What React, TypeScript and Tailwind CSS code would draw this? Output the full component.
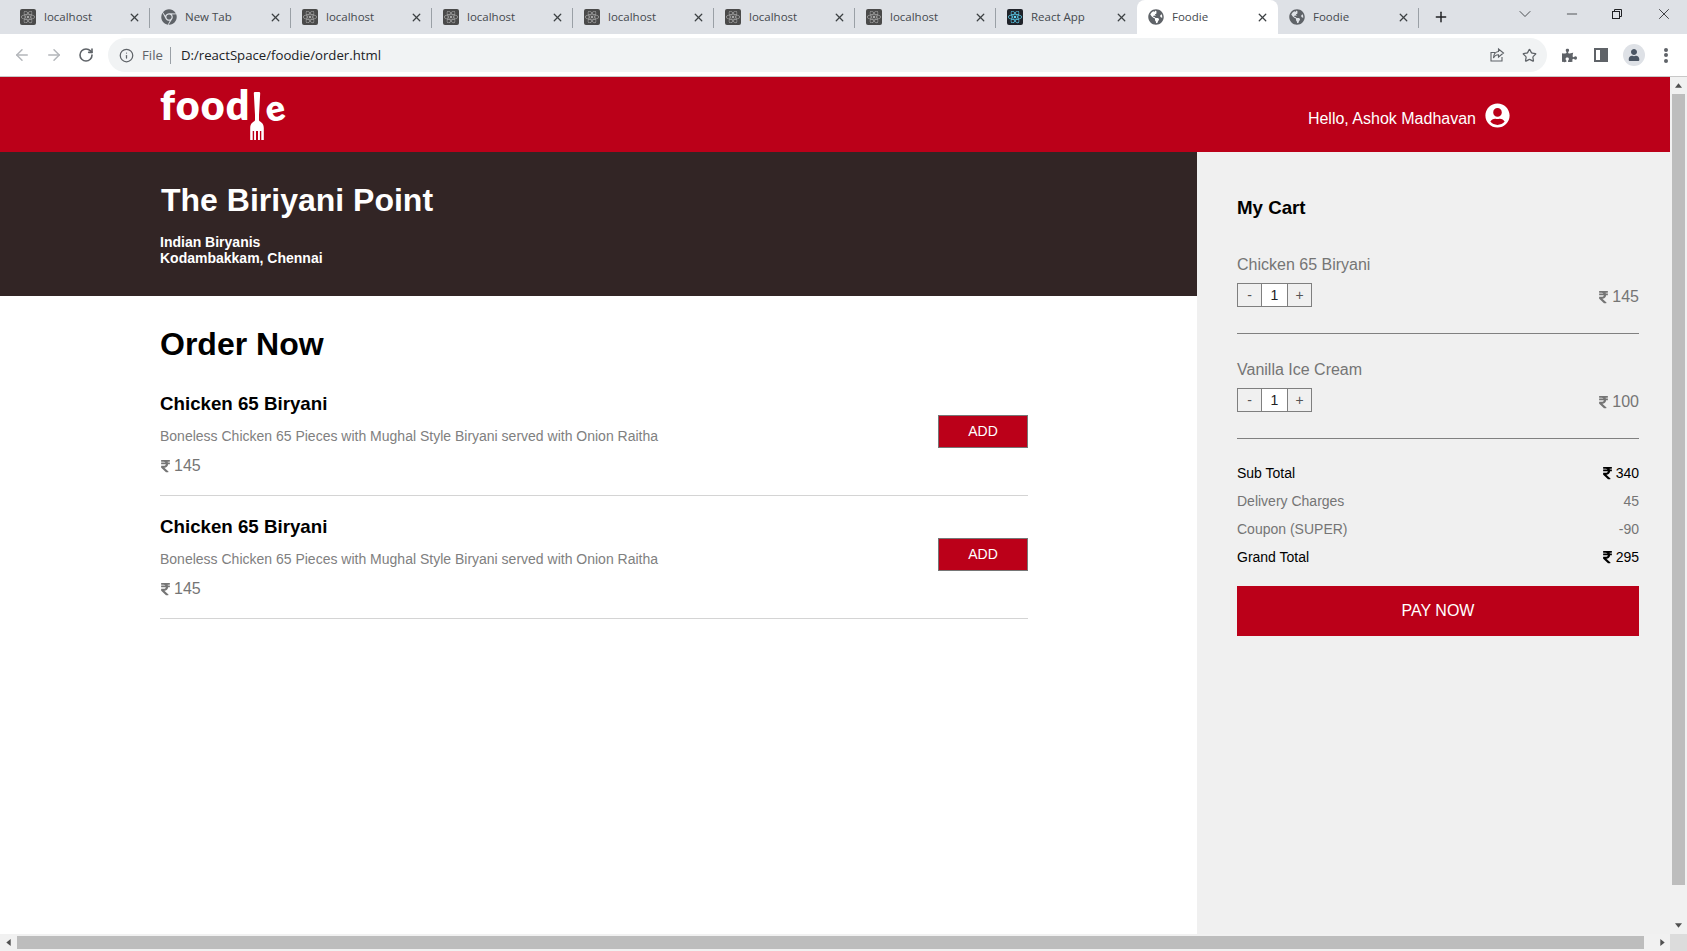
import React from "react";
import { ArrowLeft, ArrowRight, RotateCw, Info, Star, X, Plus, ChevronDown, Minus } from "lucide-react";
import { FaReact, FaChrome, FaGlobeAmericas, FaPuzzlePiece, FaUser, FaUserCircle, FaRupeeSign } from "react-icons/fa";

type Tab = { label: string; icon: "react" | "chrome" | "globe" | "app"; active?: boolean };

const tabs: Tab[] = [
  { label: "localhost", icon: "react" },
  { label: "New Tab", icon: "chrome" },
  { label: "localhost", icon: "react" },
  { label: "localhost", icon: "react" },
  { label: "localhost", icon: "react" },
  { label: "localhost", icon: "react" },
  { label: "localhost", icon: "react" },
  { label: "React App", icon: "app" },
  { label: "Foodie", icon: "globe", active: true },
  { label: "Foodie", icon: "globe" },
];

function Favicon({ icon }: { icon: Tab["icon"] }) {
  if (icon === "chrome") return <FaChrome className="w-4 h-4 text-[#5f6368]" />;
  if (icon === "globe") return <FaGlobeAmericas className="w-4 h-4 text-[#5f6368]" />;
  if (icon === "app")
    return (
      <span className="w-4 h-4 rounded-[2px] bg-[#20232a] flex items-center justify-center">
        <FaReact className="w-[14px] h-[14px] text-[#61dafb]" />
      </span>
    );
  return (
    <span className="w-4 h-4 rounded-[2px] bg-[#4a4a4a] flex items-center justify-center">
      <FaReact className="w-[14px] h-[14px] text-[#a8a8a8]" />
    </span>
  );
}

function BrowserTab({ tab, sep }: { tab: Tab; sep: boolean }) {
  return (
    <div
      className={
        "relative w-[141px] h-[34px] shrink-0 flex items-center pl-[11px] pr-[9px] rounded-t-[8px] " +
        (tab.active ? "bg-white" : "")
      }
    >
      <Favicon icon={tab.icon} />
      <span className="ml-[8px] flex-1 text-[11.5px] text-[#45494e] font-['Open_Sans',sans-serif]">{tab.label}</span>
      <X className="w-[13px] h-[13px] text-[#3c4043]" strokeWidth={2.4} />
      {sep && <span className="absolute right-0 top-[8px] h-[20px] w-px bg-[#9aa0a6]" />}
    </div>
  );
}

function TabStrip() {
  return (
    <div className="h-[34px] bg-[#dee1e6] flex items-center pl-[9px] shrink-0">
      {tabs.map((t, i) => (
        <BrowserTab key={i} tab={t} sep={!t.active && i !== 7} />
      ))}
      <Plus className="ml-[14px] w-[16px] h-[16px] text-[#202124]" strokeWidth={2.2} />
      <div className="ml-auto flex items-center h-full pb-[6px]">
        <ChevronDown className="w-[20px] h-[20px] text-[#3c4043] mr-[29px]" strokeWidth={1.1} />
        <Minus className="w-[16px] h-[16px] text-[#202124] mr-[31px]" strokeWidth={1.1} />
        <svg width="12" height="12" viewBox="0 0 12 12" fill="none" stroke="#202124" className="mr-[32px]">
          <rect x="1.5" y="3.5" width="7" height="7" />
          <path d="M3.5 3.5V1.5H10.500V8.500H8.500" />
        </svg>
        <X className="w-[18px] h-[18px] text-[#202124] mr-[14px]" strokeWidth={1.1} />
      </div>
    </div>
  );
}

function Toolbar() {
  return (
    <div className="h-[43px] bg-white border-b border-[#c8c8c8] flex items-start pt-[4px] shrink-0">
      <div className="w-[108px] h-[34px] flex items-center pl-[13px] gap-[14px] shrink-0">
        <ArrowLeft className="w-[18px] h-[18px] text-[#b4b7bb]" strokeWidth={2} />
        <ArrowRight className="w-[18px] h-[18px] text-[#b4b7bb]" strokeWidth={2} />
        <RotateCw className="ml-[1px] w-[16px] h-[16px] text-[#5f6368]" strokeWidth={2.4} />
      </div>
      <div className="w-[1439px] h-[34px] bg-[#f1f3f4] rounded-full flex items-center pl-[11px] pr-[10px] text-[13.2px] font-['Open_Sans',sans-serif]">
        <Info className="w-[15px] h-[15px] text-[#5f6368]" strokeWidth={2} />
        <span className="ml-[8px] mt-[1px] text-[#5f6368]">File</span>
        <span className="ml-[7px] mr-[10px] w-px h-[17px] bg-[#9aa0a6]" />
        <span className="mt-[1px] text-[#202124]">D:/reactSpace/foodie/order.html</span>
        <svg width="16" height="16" viewBox="0 0 16 16" fill="none" stroke="#5f6368" strokeWidth="1.1" className="ml-auto mr-[17px]">
          <path d="M13 10v4H2V5.500h4" />
          <path d="M9.500 2l5 4-5 4V7.700C7 7.700 5.400 8.800 4.500 11 4.600 7.400 6.400 4.900 9.500 4.500z" />
        </svg>
        <Star className="w-[15px] h-[15px] text-[#5f6368]" strokeWidth={2} />
      </div>
      <div className="h-[34px] flex items-center pl-[15px] text-[#5f6368]">
        <FaPuzzlePiece className="w-[15px] h-[15px]" />
        <span className="ml-[17px] w-[14px] h-[14px] border-[2px] border-[#5f6368] flex justify-end">
          <span className="w-[6px] h-full bg-[#5f6368]" />
        </span>
        <span className="ml-[15px] w-[22px] h-[22px] rounded-full bg-[#dee1e6] flex items-center justify-center">
          <FaUser className="w-[12px] h-[12px] text-[#4b5563]" />
        </span>
        <span className="ml-[19px] flex flex-col gap-[1.500px]">
          <span className="w-[4px] h-[4px] rounded-full bg-[#5f6368]" />
          <span className="w-[4px] h-[4px] rounded-full bg-[#5f6368]" />
          <span className="w-[4px] h-[4px] rounded-full bg-[#5f6368]" />
        </span>
      </div>
    </div>
  );
}

function Fork() {
  return (
    <svg width="14" height="50" viewBox="0 0 14 50" fill="white" className="shrink-0">
      <path d="M3.800 3Q3.800 2 5 2H9Q10.200 2 10.200 3L9 25V30C9 32 13.800 32 13.800 38V50H11.300V41H9.900V50H8V41H6V50H4.100V41H2.700V50H.2V38C.2 32 5 32 5 30V25z" />
    </svg>
  );
}

function Logo() {
  return (
    <div className="flex items-start h-[50px] text-white font-['Lato',sans-serif] font-extrabold text-[41px] leading-[40px]">
      <span className="w-[90px] mt-[-5px] tracking-[1.2px]">food</span>
      <Fork />
      <span className="ml-[1px] mt-[-3px] text-[36px] -rotate-12">e</span>
    </div>
  );
}

function Rupee() {
  return <FaRupeeSign className="w-[11px] h-[14px] mr-[3px] inline-block" />;
}

function MenuItem() {
  return (
    <div className="h-[123px] border-b border-[#d4d4d4] flex items-start justify-between">
      <div className="pt-[19px]">
        <h3 className="text-[18.720px] leading-[24px] font-bold text-black">Chicken 65 Biryani</h3>
        <p className="mt-[10px] text-[14px] leading-[20px] text-[#808080]">
          Boneless Chicken 65 Pieces with Mughal Style Biryani served with Onion Raitha
        </p>
        <p className="mt-[8px] text-[16px] leading-[24px] text-[#757575] flex items-center">
          <Rupee />
          145
        </p>
      </div>
      <button className="mt-[42px] w-[90px] h-[33px] bg-[#bb0019] border border-[#767676] text-white text-[14px]">ADD</button>
    </div>
  );
}

function Qty() {
  return (
    <div className="mt-[7px] w-[75px] h-[24px] border border-[#7f7f7f] flex text-[14px] text-[#555]">
      <span className="w-[23px] flex items-center justify-center">-</span>
      <span className="w-[27px] bg-white border-x border-[#7f7f7f] flex items-center justify-center text-[#222]">1</span>
      <span className="flex-1 flex items-center justify-center">+</span>
    </div>
  );
}

function CartItem({ name, price }: { name: string; price: string }) {
  return (
    <div className="h-[105px] border-b border-[#808080] flex items-start justify-between">
      <div className="pt-[25px]">
        <p className="text-[16px] leading-[22px] text-[#757575]">{name}</p>
        <Qty />
      </div>
      <p className="mt-[57px] text-[16px] leading-[22px] text-[#757575] flex items-center">
        <Rupee />
        {price}
      </p>
    </div>
  );
}

function Total({ label, value, strong, rupee }: { label: string; value: string; strong?: boolean; rupee?: boolean }) {
  return (
    <div className={"h-[28px] flex items-center justify-between text-[14px] " + (strong ? "text-black" : "text-[#757575]")}>
      <span>{label}</span>
      <span className="flex items-center">
        {rupee && <Rupee />}
        {value}
      </span>
    </div>
  );
}

function Arrow({ d }: { d: string }) {
  return (
    <svg width="7" height="7" viewBox="0 0 8 8" fill="#505050">
      <path d={d} />
    </svg>
  );
}

export default function App() {
  return (
    <div className="w-[1687px] h-[951px] overflow-hidden flex flex-col bg-white font-['Liberation_Sans',Arial,sans-serif]">
      <TabStrip />
      <Toolbar />
      <div className="flex-1 min-h-0 flex">
        <div className="flex-1 min-w-0 flex flex-col">
          <header className="h-[75px] bg-[#bb0019] flex shrink-0 pl-[160px] pr-[160px] pt-[13px] justify-between">
            <Logo />
            <div className="flex items-center h-[50px] text-white text-[16px] gap-[9px]">
              <span className="mt-[8px]">Hello, Ashok Madhavan</span>
              <FaUserCircle className="w-[25px] h-[25px]" />
            </div>
          </header>
          <div className="flex-1 min-h-0 flex">
            <main className="w-[1197px] shrink-0">
              <section className="h-[144px] bg-[#322525] text-white pl-[161px] pt-[28px]">
                <h1 className="text-[32px] leading-[40px] font-bold">The Biriyani Point</h1>
                <p className="mt-[14px] ml-[-1px] text-[14px] leading-[16px] font-bold">Indian Biryanis</p>
                <p className="ml-[-1px] text-[14px] leading-[16px] font-bold">Kodambakkam, Chennai</p>
              </section>
              <section className="pl-[160px] w-[1028px] pt-[28px]">
                <h2 className="text-[32px] leading-[40px] font-bold text-black mb-[9px]">Order Now</h2>
                <MenuItem />
                <MenuItem />
              </section>
            </main>
            <aside className="flex-1 bg-[#f0f0f0] pl-[40px] pr-[31px] pt-[43px]">
              <h2 className="text-[18.720px] leading-[26px] font-bold text-black mb-[8px]">My Cart</h2>
              <CartItem name="Chicken 65 Biryani" price="145" />
              <CartItem name="Vanilla Ice Cream" price="100" />
              <div className="mt-[20px]">
                <Total label="Sub Total" value="340" strong rupee />
                <Total label="Delivery Charges" value="45" />
                <Total label="Coupon (SUPER)" value="-90" />
                <Total label="Grand Total" value="295" strong rupee />
              </div>
              <button className="mt-[15px] w-full h-[50px] bg-[#bb0019] text-white text-[16px]">PAY NOW</button>
            </aside>
          </div>
        </div>
        <div className="w-[17px] shrink-0 bg-[#f1f1f1] flex flex-col items-center">
          <div className="h-[17px] flex items-center justify-center">
            <Arrow d="M4 1.500L8 6.500H0z" />
          </div>
          <div className="w-[13px] flex-1 bg-[#bdbdbd]" />
          <div className="h-[49px] flex items-end justify-center pb-[5px]">
            <Arrow d="M4 6.500L0 1.500H8z" />
          </div>
        </div>
      </div>
      <div className="h-[17px] shrink-0 flex bg-[#f1f1f1]">
        <div className="w-[17px] flex items-center justify-center">
          <Arrow d="M1.500 4L6.500 0V8z" />
        </div>
        <div className="w-[1627px] h-[13px] mt-[2px] bg-[#bdbdbd]" />
        <div className="flex-1 flex items-center justify-end pr-[4px]">
          <Arrow d="M6.500 4L1.500 8V0z" />
        </div>
        <div className="w-[17px] bg-[#dcdcdc]" />
      </div>
    </div>
  );
}
